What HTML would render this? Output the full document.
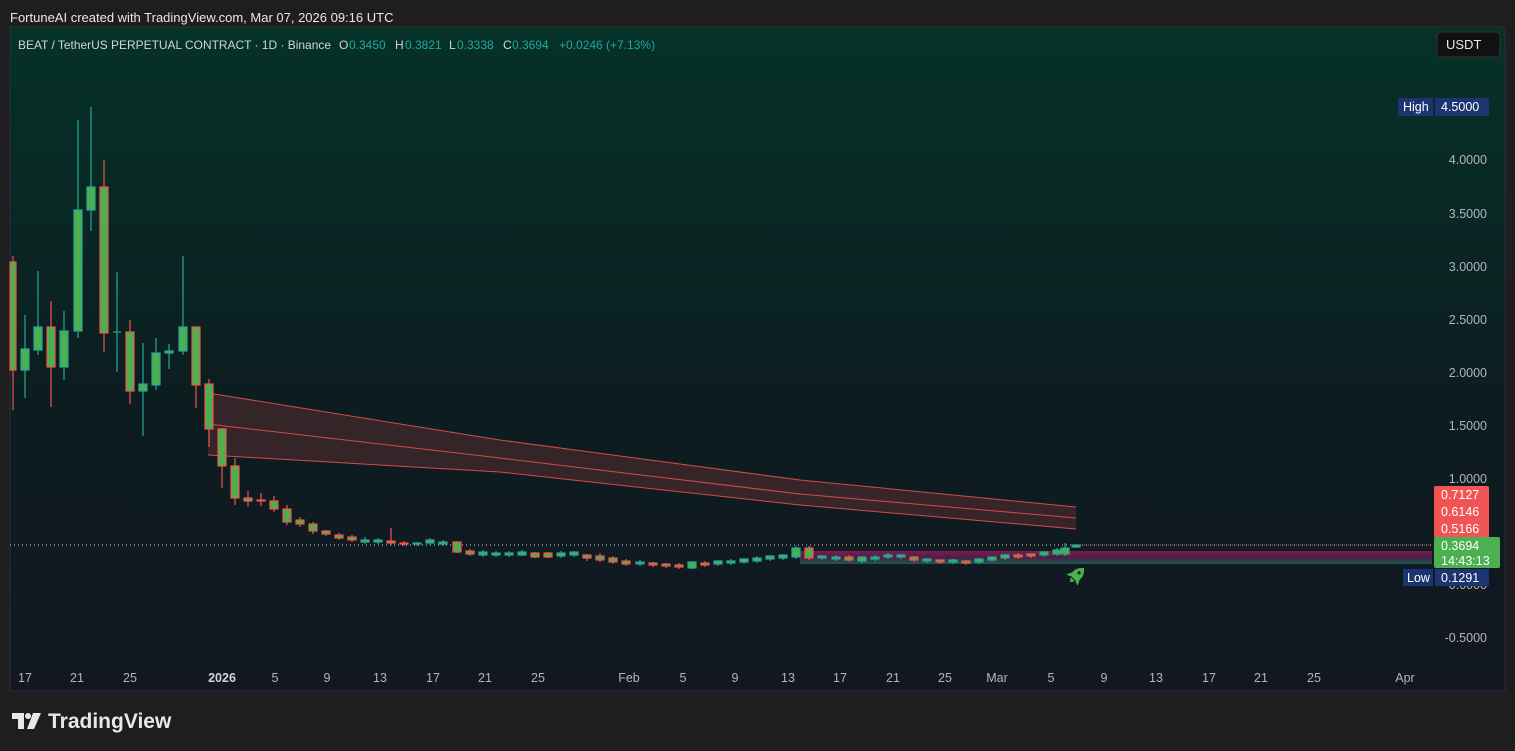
<!DOCTYPE html>
<html><head><meta charset="utf-8"><style>
body{margin:0;width:1515px;height:751px;background:#1e1e1e;overflow:hidden;font-family:"Liberation Sans",sans-serif}
.hdr{position:absolute;left:10px;top:10px;color:#e8e8e8;font-size:13px}
svg{position:absolute;left:0;top:0}
</style></head><body>
<div class="hdr">FortuneAI created with TradingView.com, Mar 07, 2026 09:16 UTC</div>
<svg width="1515" height="751" viewBox="0 0 1515 751" font-family="Liberation Sans, sans-serif">
<defs>
<linearGradient id="bg" x1="0" y1="0" x2="0" y2="1">
<stop offset="0" stop-color="#053228"/><stop offset="0.55" stop-color="#0c1d20"/><stop offset="1" stop-color="#131722"/>
</linearGradient>
<linearGradient id="pk" x1="0" y1="0" x2="0" y2="1">
<stop offset="0" stop-color="#8a1a5a" stop-opacity="0.9"/><stop offset="0.5" stop-color="#5a2050" stop-opacity="0.8"/><stop offset="1" stop-color="#1a6a5a" stop-opacity="0.8"/>
</linearGradient>
</defs>
<rect x="10" y="27" width="1495" height="664" fill="url(#bg)" stroke="#2a2e39"/>
<g font-size="12">
<text x="18" y="49" fill="#d1d4dc" textLength="313" lengthAdjust="spacingAndGlyphs">BEAT / TetherUS PERPETUAL CONTRACT · 1D · Binance</text>
<text x="339" y="49" fill="#d1d4dc">O</text><text x="349" y="49" fill="#26a69a">0.3450</text>
<text x="395" y="49" fill="#d1d4dc">H</text><text x="405" y="49" fill="#26a69a">0.3821</text>
<text x="449" y="49" fill="#d1d4dc">L</text><text x="457" y="49" fill="#26a69a">0.3338</text>
<text x="503" y="49" fill="#d1d4dc">C</text><text x="512" y="49" fill="#26a69a">0.3694</text>
<text x="559" y="49" fill="#26a69a">+0.0246 (+7.13%)</text>
</g>
<rect x="1437" y="32" width="63" height="25" rx="4" fill="#111" stroke="#333"/>
<text x="1446" y="49" font-size="13" fill="#e8e8e8">USDT</text>
<path d="M208 393 L500 440 L800 480 L1076 507 L1076 529 L800 505 L500 472 L208 455 Z" fill="#ef5350" fill-opacity="0.18"/>
<g fill="none" stroke="#ef5350" stroke-width="1" opacity="0.85">
<path d="M208 393 L500 440 L800 480 L1076 507"/>
<path d="M208 424 L500 458 L800 494 L1076 518"/>
<path d="M208 455 L500 472 L800 505 L1076 529"/>
</g>
<rect x="800" y="551" width="632" height="13" fill="url(#pk)"/>
<line x1="10" y1="545" x2="1432" y2="545" stroke="#c8d0d0" stroke-dasharray="1,3"/>
<g stroke-width="1.2" fill="#4caf50">
<g stroke="#ef5350">
<line x1="13" y1="256" x2="13" y2="410"/><rect x="10" y="262" width="6" height="108"/>
<line x1="51" y1="301" x2="51" y2="407"/><rect x="47" y="327" width="8" height="40"/>
<line x1="104" y1="160" x2="104" y2="352"/><rect x="100" y="187" width="8" height="146"/>
<line x1="130" y1="320" x2="130" y2="404"/><rect x="126" y="332" width="8" height="59"/>
<line x1="196" y1="327" x2="196" y2="408"/><rect x="192" y="327" width="8" height="58"/>
<line x1="209" y1="379" x2="209" y2="447"/><rect x="205" y="384" width="8" height="45"/>
<line x1="222" y1="428" x2="222" y2="488"/><rect x="218" y="429" width="8" height="37"/>
<line x1="235" y1="458" x2="235" y2="505"/><rect x="231" y="466" width="8" height="32"/>
<line x1="248" y1="491" x2="248" y2="507"/><rect x="244" y="498" width="8" height="3"/>
<line x1="261" y1="493" x2="261" y2="506"/><rect x="257" y="500" width="8" height="1"/>
<line x1="274" y1="496" x2="274" y2="512"/><rect x="270" y="501" width="8" height="8"/>
<line x1="287" y1="505" x2="287" y2="525"/><rect x="283" y="509" width="8" height="13"/>
<line x1="300" y1="517" x2="300" y2="527"/><rect x="296" y="520" width="8" height="4"/>
<line x1="313" y1="522" x2="313" y2="534"/><rect x="309" y="524" width="8" height="7"/>
<line x1="326" y1="530" x2="326" y2="536"/><rect x="322" y="531" width="8" height="3"/>
<line x1="339" y1="533" x2="339" y2="540"/><rect x="335" y="535" width="8" height="3"/>
<line x1="352" y1="535" x2="352" y2="542"/><rect x="348" y="537" width="8" height="3"/>
<line x1="391" y1="528" x2="391" y2="545"/><rect x="387" y="541" width="8" height="2"/>
<line x1="404" y1="541" x2="404" y2="546"/><rect x="400" y="543" width="8" height="1"/>
<line x1="457" y1="541" x2="457" y2="553"/><rect x="453" y="542" width="8" height="10"/>
<line x1="470" y1="549" x2="470" y2="556"/><rect x="466" y="551" width="8" height="3"/>
<line x1="535" y1="552" x2="535" y2="558"/><rect x="531" y="553" width="8" height="4"/>
<line x1="548" y1="552" x2="548" y2="558"/><rect x="544" y="553" width="8" height="4"/>
<line x1="587" y1="554" x2="587" y2="561"/><rect x="583" y="555" width="8" height="3"/>
<line x1="600" y1="553" x2="600" y2="562"/><rect x="596" y="556" width="8" height="4"/>
<line x1="613" y1="556" x2="613" y2="564"/><rect x="609" y="558" width="8" height="4"/>
<line x1="626" y1="559" x2="626" y2="566"/><rect x="622" y="561" width="8" height="3"/>
<line x1="653" y1="562" x2="653" y2="567"/><rect x="649" y="563" width="8" height="2"/>
<line x1="666" y1="563" x2="666" y2="568"/><rect x="662" y="564" width="8" height="2"/>
<line x1="679" y1="563" x2="679" y2="569"/><rect x="675" y="565" width="8" height="2"/>
<line x1="705" y1="561" x2="705" y2="567"/><rect x="701" y="563" width="8" height="2"/>
<line x1="809" y1="546" x2="809" y2="560"/><rect x="805" y="548" width="8" height="10"/>
<line x1="849" y1="555" x2="849" y2="562"/><rect x="845" y="557" width="8" height="3"/>
<line x1="914" y1="556" x2="914" y2="562"/><rect x="910" y="557" width="8" height="3"/>
<line x1="940" y1="559" x2="940" y2="564"/><rect x="936" y="560" width="8" height="2"/>
<line x1="966" y1="560" x2="966" y2="565"/><rect x="962" y="561" width="8" height="2"/>
<line x1="1018" y1="553" x2="1018" y2="559"/><rect x="1014" y="555" width="8" height="2"/>
<line x1="1031" y1="553" x2="1031" y2="558"/><rect x="1027" y="554" width="8" height="2"/>
</g>
<g stroke="#26a69a">
<line x1="25" y1="315" x2="25" y2="398"/><rect x="21" y="349" width="8" height="21"/>
<line x1="38" y1="271" x2="38" y2="355"/><rect x="34" y="327" width="8" height="23"/>
<line x1="64" y1="311" x2="64" y2="380"/><rect x="60" y="331" width="8" height="36"/>
<line x1="78" y1="120" x2="78" y2="338"/><rect x="74" y="210" width="8" height="121"/>
<line x1="91" y1="107" x2="91" y2="231"/><rect x="87" y="187" width="8" height="23"/>
<line x1="117" y1="272" x2="117" y2="372"/><line x1="113" y1="332" x2="121" y2="332"/>
<line x1="143" y1="343" x2="143" y2="436"/><rect x="139" y="384" width="8" height="7"/>
<line x1="156" y1="338" x2="156" y2="390"/><rect x="152" y="353" width="8" height="32"/>
<line x1="169" y1="344" x2="169" y2="369"/><rect x="165" y="351" width="8" height="2"/>
<line x1="183" y1="256" x2="183" y2="355"/><rect x="179" y="327" width="8" height="24"/>
<line x1="365" y1="537" x2="365" y2="544"/><rect x="361" y="540" width="8" height="2"/>
<line x1="378" y1="538" x2="378" y2="544"/><rect x="374" y="540" width="8" height="2"/>
<line x1="417" y1="542" x2="417" y2="546"/><rect x="413" y="543" width="8" height="1"/>
<line x1="430" y1="538" x2="430" y2="545"/><rect x="426" y="540" width="8" height="3"/>
<line x1="443" y1="540" x2="443" y2="546"/><rect x="439" y="542" width="8" height="2"/>
<line x1="483" y1="550" x2="483" y2="557"/><rect x="479" y="552" width="8" height="3"/>
<line x1="496" y1="551" x2="496" y2="557"/><rect x="492" y="553" width="8" height="2"/>
<line x1="509" y1="551" x2="509" y2="557"/><rect x="505" y="553" width="8" height="2"/>
<line x1="522" y1="550" x2="522" y2="556"/><rect x="518" y="552" width="8" height="3"/>
<line x1="561" y1="551" x2="561" y2="558"/><rect x="557" y="553" width="8" height="3"/>
<line x1="574" y1="551" x2="574" y2="557"/><rect x="570" y="552" width="8" height="3"/>
<line x1="640" y1="560" x2="640" y2="566"/><rect x="636" y="562" width="8" height="2"/>
<line x1="692" y1="561" x2="692" y2="569"/><rect x="688" y="562" width="8" height="6"/>
<line x1="718" y1="560" x2="718" y2="566"/><rect x="714" y="561" width="8" height="3"/>
<line x1="731" y1="559" x2="731" y2="565"/><rect x="727" y="561" width="8" height="2"/>
<line x1="744" y1="558" x2="744" y2="564"/><rect x="740" y="559" width="8" height="3"/>
<line x1="757" y1="556" x2="757" y2="563"/><rect x="753" y="558" width="8" height="3"/>
<line x1="770" y1="555" x2="770" y2="561"/><rect x="766" y="556" width="8" height="3"/>
<line x1="783" y1="554" x2="783" y2="560"/><rect x="779" y="555" width="8" height="3"/>
<line x1="796" y1="546" x2="796" y2="559"/><rect x="792" y="548" width="8" height="9"/>
<line x1="822" y1="555" x2="822" y2="560"/><rect x="818" y="556" width="8" height="2"/>
<line x1="836" y1="555" x2="836" y2="561"/><rect x="832" y="557" width="8" height="2"/>
<line x1="862" y1="556" x2="862" y2="563"/><rect x="858" y="557" width="8" height="4"/>
<line x1="875" y1="555" x2="875" y2="561"/><rect x="871" y="557" width="8" height="2"/>
<line x1="888" y1="553" x2="888" y2="559"/><rect x="884" y="555" width="8" height="2"/>
<line x1="901" y1="554" x2="901" y2="559"/><rect x="897" y="555" width="8" height="2"/>
<line x1="927" y1="558" x2="927" y2="563"/><rect x="923" y="559" width="8" height="2"/>
<line x1="953" y1="559" x2="953" y2="564"/><rect x="949" y="560" width="8" height="2"/>
<line x1="979" y1="558" x2="979" y2="564"/><rect x="975" y="559" width="8" height="3"/>
<line x1="992" y1="556" x2="992" y2="562"/><rect x="988" y="557" width="8" height="3"/>
<line x1="1005" y1="554" x2="1005" y2="560"/><rect x="1001" y="555" width="8" height="3"/>
<line x1="1044" y1="551" x2="1044" y2="557"/><rect x="1040" y="552" width="8" height="3"/>
<line x1="1057" y1="548" x2="1057" y2="556"/><rect x="1053" y="550" width="8" height="4"/>
<line x1="1065" y1="543" x2="1065" y2="556"/><rect x="1061" y="548" width="8" height="6"/>
<line x1="1076" y1="544" x2="1076" y2="548"/><rect x="1072" y="545" width="8" height="2"/>
</g>
</g>
<line x1="1076" y1="545" x2="1432" y2="545" stroke="#ef5350" stroke-dasharray="1,3"/>
<g transform="translate(1077,575) rotate(45)" fill="#4caf50">
<path d="M0 -10 C6 -5 6 1 4.5 5 L-4.5 5 C-6 1 -6 -5 0 -10 Z"/>
<path d="M-4 -1 L-8 7 L-4 6 Z M4 -1 L8 7 L4 6 Z"/>
<path d="M-3 6 L0 10 L3 6 Z"/>
<circle cx="0" cy="-3" r="1.6" fill="#0f1e22"/>
</g>
<g font-size="12.5" fill="#b2b5be" text-anchor="end">
<text x="1487" y="164">4.0000</text>
<text x="1487" y="218">3.5000</text>
<text x="1487" y="271">3.0000</text>
<text x="1487" y="324">2.5000</text>
<text x="1487" y="377">2.0000</text>
<text x="1487" y="430">1.5000</text>
<text x="1487" y="483">1.0000</text>
<text x="1487" y="589">0.0000</text>
<text x="1487" y="642">-0.5000</text>
</g>
<rect x="1398" y="98" width="35" height="18" fill="#1c3570"/>
<rect x="1435" y="98" width="54" height="18" fill="#1c3570"/>
<text x="1403" y="111" font-size="12.5" fill="#fff">High</text>
<text x="1441" y="111" font-size="12.5" fill="#fff">4.5000</text>
<rect x="1434" y="486" width="55" height="52" rx="2" fill="#f05454"/>
<g font-size="12.5" fill="#fff">
<text x="1441" y="499">0.7127</text>
<text x="1441" y="516">0.6146</text>
<text x="1441" y="533">0.5166</text>
</g>
<rect x="1434" y="537" width="66" height="31" rx="2" fill="#4caf50"/>
<text x="1441" y="550" font-size="12.5" fill="#fff">0.3694</text>
<text x="1441" y="565" font-size="12.5" fill="#fff">14:43:13</text>
<rect x="1403" y="569" width="30" height="17" fill="#1c3570"/>
<rect x="1435" y="569" width="54" height="17" fill="#1c3570"/>
<text x="1407" y="582" font-size="12.5" fill="#fff">Low</text>
<text x="1441" y="582" font-size="12.5" fill="#fff">0.1291</text>
<g font-size="12.5" fill="#b2b5be" text-anchor="middle">
<text x="25" y="682">17</text><text x="77" y="682">21</text><text x="130" y="682">25</text>
<text x="222" y="682" font-weight="bold" fill="#d1d4dc">2026</text>
<text x="275" y="682">5</text><text x="327" y="682">9</text><text x="380" y="682">13</text>
<text x="433" y="682">17</text><text x="485" y="682">21</text><text x="538" y="682">25</text>
<text x="629" y="682">Feb</text><text x="683" y="682">5</text><text x="735" y="682">9</text>
<text x="788" y="682">13</text><text x="840" y="682">17</text><text x="893" y="682">21</text>
<text x="945" y="682">25</text><text x="997" y="682">Mar</text><text x="1051" y="682">5</text>
<text x="1104" y="682">9</text><text x="1156" y="682">13</text><text x="1209" y="682">17</text>
<text x="1261" y="682">21</text><text x="1314" y="682">25</text><text x="1405" y="682">Apr</text>
</g>
<g fill="#e8e8e8">
<path d="M12 713 H24 V729 H18 V719 H12 Z"/>
<circle cx="28" cy="716" r="3"/>
<path d="M33 713 H41 L34 729 H27 Z"/>
</g>
<text x="48" y="728" font-size="21" font-weight="bold" fill="#e8e8e8">TradingView</text>
</svg>
</body></html>
